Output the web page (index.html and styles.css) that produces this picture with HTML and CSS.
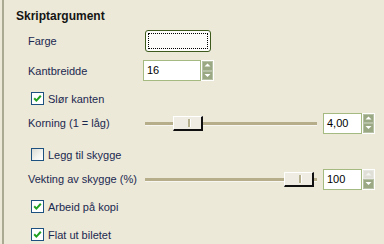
FILE: index.html
```html
<!DOCTYPE html>
<html>
<head>
<meta charset="utf-8">
<link rel="stylesheet" href="styles.css">
</head>
<body>
<div class="panel">
  <div class="title">Skriptargument</div>

  <div class="row r-farge">
    <span class="label">Farge</span>
    <div class="colorbtn"><div class="focus"></div></div>
  </div>

  <div class="row r-kant">
    <span class="label">Kantbreidde</span>
    <div class="spin">
      <div class="entry e-kant">16</div>
      <div class="arrows">
        <span class="btn"><svg width="7" height="5" viewBox="0 0 7 5"><path d="M3.5 0.5 L6.5 3.5 L0.5 3.5 Z" fill="#fff"/></svg></span>
        <span class="btn"><svg width="7" height="5" viewBox="0 0 7 5"><path d="M0.5 1 L6.5 1 L3.5 4 Z" fill="#fff"/></svg></span>
      </div>
    </div>
  </div>

  <div class="row check r-slor">
    <span class="box"><svg width="9" height="9" viewBox="0 0 9 9"><path d="M1.2 4.2 L3.4 6.6 L7.8 1.8" fill="none" stroke="#21a121" stroke-width="2"/></svg></span>
    <span class="clabel">Slør kanten</span>
  </div>

  <div class="row r-korn">
    <span class="label">Korning (1 = låg)</span>
    <div class="slider">
      <div class="track"></div>
      <div class="thumb t-korn"><span class="grip"></span></div>
    </div>
    <div class="spin">
      <div class="entry e-small">4,00</div>
      <div class="arrows">
        <span class="btn"><svg width="7" height="5" viewBox="0 0 7 5"><path d="M3.5 0.5 L6.5 3.5 L0.5 3.5 Z" fill="#fff"/></svg></span>
        <span class="btn"><svg width="7" height="5" viewBox="0 0 7 5"><path d="M0.5 1 L6.5 1 L3.5 4 Z" fill="#fff"/></svg></span>
      </div>
    </div>
  </div>

  <div class="row check r-legg">
    <span class="box off"></span>
    <span class="clabel">Legg til skygge</span>
  </div>

  <div class="row r-vekt">
    <span class="label">Vekting av skygge (%)</span>
    <div class="slider">
      <div class="track"></div>
      <div class="thumb t-vekt"><span class="grip"></span></div>
    </div>
    <div class="spin">
      <div class="entry e-small">100</div>
      <div class="arrows">
        <span class="btn dis"><svg width="7" height="5" viewBox="0 0 7 5"><path d="M3.5 0.5 L6.5 3.5 L0.5 3.5 Z" fill="#f4f4f0"/></svg></span>
        <span class="btn"><svg width="7" height="5" viewBox="0 0 7 5"><path d="M0.5 1 L6.5 1 L3.5 4 Z" fill="#fff"/></svg></span>
      </div>
    </div>
  </div>

  <div class="row check r-arb">
    <span class="box"><svg width="9" height="9" viewBox="0 0 9 9"><path d="M1.2 4.2 L3.4 6.6 L7.8 1.8" fill="none" stroke="#21a121" stroke-width="2"/></svg></span>
    <span class="clabel">Arbeid på kopi</span>
  </div>

  <div class="row check r-flat">
    <span class="box"><svg width="9" height="9" viewBox="0 0 9 9"><path d="M1.2 4.2 L3.4 6.6 L7.8 1.8" fill="none" stroke="#21a121" stroke-width="2"/></svg></span>
    <span class="clabel">Flat ut biletet</span>
  </div>
</div>
</body>
</html>
```

FILE: styles.css
```css
html, body {
  margin: 0;
  padding: 0;
}
body {
  width: 384px;
  height: 244px;
  overflow: hidden;
  background: #ece9d8;
  font-family: "Liberation Sans", Arial, sans-serif;
  font-size: 11px;
  color: #1b2850;
}
.panel {
  margin-left: 2px;
  border-left: 2px solid #aaa991;
  height: 244px;
  display: flex;
  flex-direction: column;
}
.title {
  margin: 9px 0 0 12px;
  height: 14px;
  line-height: 14px;
  font-weight: bold;
  font-size: 12px;
  color: #151515;
}
.row {
  display: flex;
  align-items: center;
  margin-left: 24px;
}
.label {
  width: 115px;
  flex: none;
}
.r-farge { margin-top: 7px; height: 22px; }
.r-kant  { margin-top: 8px; height: 21px; }
.r-slor  { margin-top: 11px; height: 13px; }
.r-korn  { margin-top: 7px; height: 22px; }
.r-legg  { margin-top: 14px; height: 13px; }
.r-vekt  { margin-top: 7px; height: 22px; }
.r-arb   { margin-top: 10px; height: 13px; }
.r-flat  { margin-top: 15px; height: 13px; }

.check { margin-left: 27px; }
.box {
  width: 11px;
  height: 11px;
  border: 1px solid #1c5180;
  background: #fff;
  display: flex;
  align-items: center;
  justify-content: center;
  flex: none;
}
.box.off {
  background: linear-gradient(135deg, #dcdcd5 0%, #f4f4f0 60%, #fff 100%);
}
.clabel {
  margin-left: 4px;
}

.colorbtn {
  margin-left: 2px;
  width: 64px;
  height: 20px;
  border: 1px solid #3e5b1d;
  border-radius: 3px;
  background: #fcfcfa;
  box-sizing: content-box;
  position: relative;
}
.focus {
  position: absolute;
  left: 2px;
  top: 2px;
  right: 2px;
  bottom: 2px;
  border: 1px dotted #000;
}

.spin {
  display: flex;
  height: 21px;
}
.entry {
  background: #fff;
  border: 1px solid #a4ba80;
  box-sizing: border-box;
  height: 21px;
  line-height: 19px;
  padding-left: 3px;
  color: #000;
  font-size: 11px;
}
.e-kant { width: 58px; }
.e-small { width: 39px; }
.arrows {
  width: 13px;
  box-sizing: border-box;
  padding: 1px;
  background: #fff;
  display: flex;
  flex-direction: column;
}
.btn {
  flex: 1;
  background: #9aa983;
  border: 1px solid #b7c1a6;
  box-sizing: border-box;
  display: flex;
  align-items: center;
  justify-content: center;
}
.btn.dis {
  background: #dfdfd8;
  border-color: #e8e8e2;
}

.slider {
  margin-left: 2px;
  width: 172px;
  height: 22px;
  position: relative;
  margin-right: 6px;
}
.track {
  position: absolute;
  left: 0;
  right: 0;
  top: 10px;
  height: 3px;
  background: #b6ae8b;
  border-bottom: 1px solid #f7f6f0;
}
.thumb {
  position: absolute;
  top: 4px;
  width: 30px;
  height: 15px;
  box-sizing: border-box;
  background: #efede3;
  border-top: 1px solid #fff;
  border-left: 1px solid #fff;
  border-right: 2px solid #101010;
  border-bottom: 2px solid #101010;
}
.t-korn { left: 28px; }
.t-vekt { left: 139px; }
.grip {
  position: absolute;
  left: 14px;
  top: 2px;
  width: 2px;
  height: 8px;
  background: #b7b08e;
  border-right: 1px solid #fff;
}
```
